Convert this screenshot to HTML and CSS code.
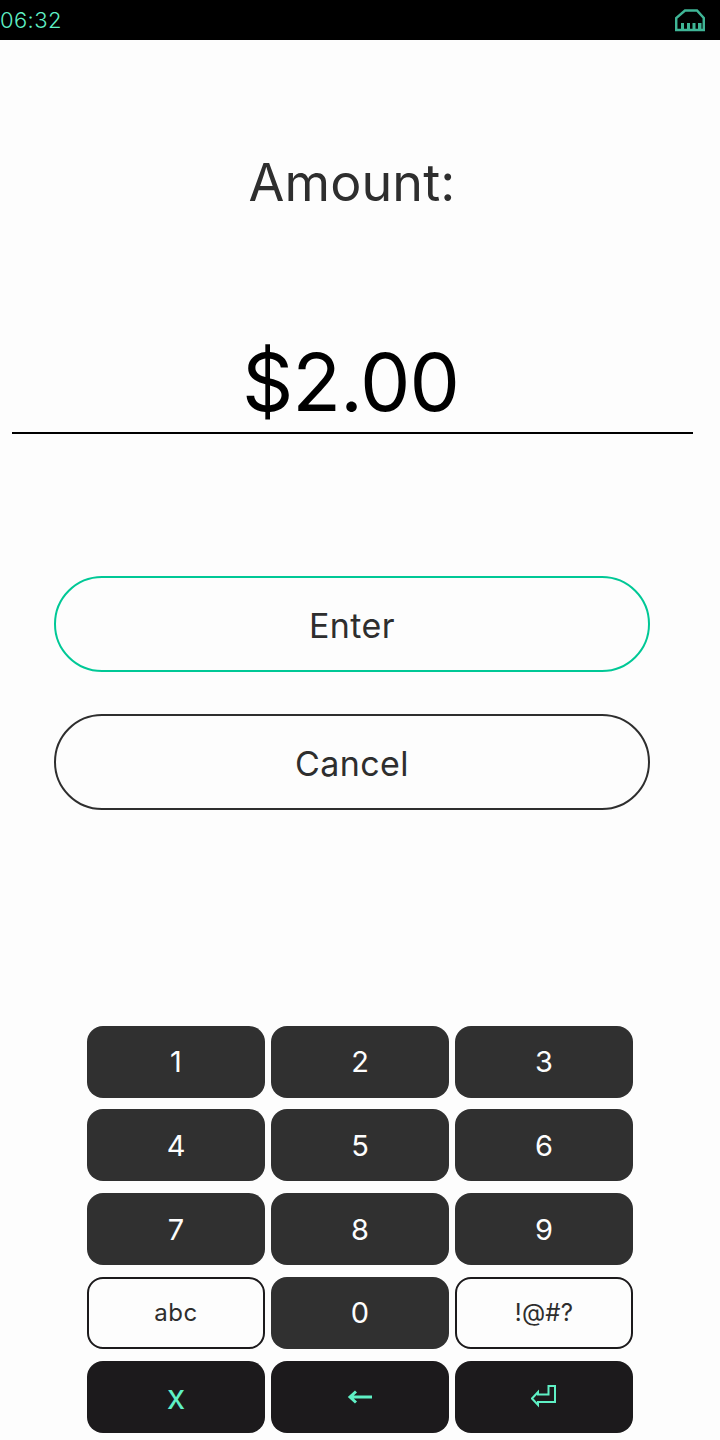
FILE: index.html
```html
<!DOCTYPE html>
<html lang="en">
<head>
<meta charset="utf-8">
<title>Amount</title>
<link rel="stylesheet" href="styles.css">
</head>
<body>
<div class="screen">
  <header class="status">
    <span class="time">06:32</span>
    <svg class="net" width="30" height="24" viewBox="0 0 30 24" aria-hidden="true">
      <path class="net-line" d="M1.2 22V10L10 2.5H22L28.8 10V22H1.2Z"/>
      <path class="net-teeth" d="M6 22V15H9V22ZM12 22V15H15V22ZM17.5 22V15H20.5V22ZM23 22V15H26.5V22Z"/>
    </svg>
  </header>
  <main class="content">
    <h1 class="title">Amount:</h1>
    <div class="value">$2.00</div>
    <div class="actions">
      <button class="pill pill-enter">Enter</button>
      <button class="pill pill-cancel">Cancel</button>
    </div>
  </main>
  <section class="keypad">
    <button class="key">1</button>
    <button class="key">2</button>
    <button class="key">3</button>
    <button class="key">4</button>
    <button class="key">5</button>
    <button class="key">6</button>
    <button class="key">7</button>
    <button class="key">8</button>
    <button class="key">9</button>
    <button class="key key-alt">abc</button>
    <button class="key">0</button>
    <button class="key key-alt key-sym">!@#?</button>
    <button class="key key-ctl">x</button>
    <button class="key key-ctl">
      <svg width="26" height="16" viewBox="0 0 26 16" aria-hidden="true"><path class="arrow" d="M25 8H3M9 2.5L3 8L9 13.5"/></svg>
    </button>
    <button class="key key-ctl">
      <svg width="26" height="24" viewBox="0 0 26 24" aria-hidden="true"><path class="enter" d="M17.5 1H24V17H7V20L1 13.5L7 7V9.5H17.5Z"/></svg>
    </button>
  </section>
</div>
</body>
</html>
```
FILE: styles.css
```css
* { box-sizing: border-box; }
html, body { margin: 0; padding: 0; }
body { background: #fdfdfd; font-family: "Inter", "Liberation Sans", sans-serif; }
.screen { width: 720px; height: 1440px; display: flex; flex-direction: column; overflow: hidden; }
.status { height: 40px; flex: none; background: #000; display: flex; align-items: center; justify-content: space-between; padding: 0 15px 0 0; }
.time { color: #5ff0c5; font-size: 22px; font-weight: 300; letter-spacing: 0.4px; line-height: 40px; }
.net { display: block; }
.net-line { fill: none; stroke: #3fb596; stroke-width: 2.5; }
.net-teeth { fill: #3fb596; }
.content { height: 985.6px; flex: none; display: flex; flex-direction: column; align-items: stretch; padding: 0 28px 0 12px; }
.title { margin: 111px 0 0; height: 64px; font-size: 52px; font-weight: 400; line-height: 64px; text-align: center; color: #2e2e2e; letter-spacing: 0.1px; }
.value { margin-top: 120px; height: 99px; padding-right: 4px; font-size: 80px; line-height: 94px; text-align: center; color: #000; border-bottom: 2px solid #000; width: 681px; letter-spacing: -1px; font-weight: 400; }
.actions { display: flex; flex-direction: column; gap: 42px; margin: 142px 0 0 42px; width: 596px; }
.pill { height: 96px; width: 596px; border-radius: 48px; background: transparent; font: 400 34px "Inter", "Liberation Sans", sans-serif; letter-spacing: 0.4px; color: #2e2e2e; padding: 2px 0 0; }
.pill-enter { border: 2px solid #00c896; }
.pill-cancel { border: 2px solid #2e2e2e; }
.keypad { display: grid; grid-template-columns: repeat(3, 178px); grid-auto-rows: 72px; column-gap: 6px; row-gap: 11.75px; padding-left: 87px; }
.key { display: flex; align-items: center; justify-content: center; border: 0; border-radius: 16px; background: #303030; color: #fdfdfd; font: 400 29px "Inter", "Liberation Sans", sans-serif; padding: 0; }
.key-alt { background: #fdfdfd; border: 2px solid #1c1a1c; color: #2e2e2e; font-size: 24px; letter-spacing: 0.5px; }
.key-sym { letter-spacing: 0.2px; }
.key-ctl { background: #1c1a1c; color: #5ff0c5; font-size: 34px; }
.arrow { fill: none; stroke: #5ff0c5; stroke-width: 3; }
.enter { fill: none; stroke: #5ff0c5; stroke-width: 2; }
```
